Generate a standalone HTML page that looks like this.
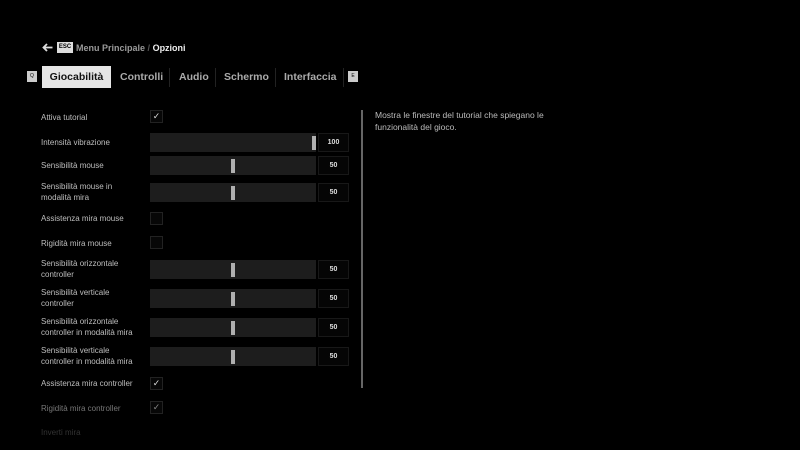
<!DOCTYPE html>
<html><head><meta charset="utf-8"><style>
*{margin:0;padding:0;box-sizing:border-box}
body{width:800px;height:450px;background:#000;font-family:"Liberation Sans",sans-serif;position:relative;overflow:hidden;color:#ccc}
.a{position:absolute}
.lbl{position:absolute;left:41px;font-size:8px;line-height:11px;color:#bdbdbd}
.bar{position:absolute;left:150px;width:166px;height:19px;background:#1d1d1d}
.val{position:absolute;left:318px;width:31px;height:19px;background:#050505;border:1px solid #181818;font-size:7px;font-weight:bold;color:#ddd;text-align:center;line-height:17px}
.knob{position:absolute;top:3px;width:4px;height:14px;background:#b0b0b0}
.cb{position:absolute;left:150px;width:13px;height:13px;border:1px solid #222;background:#070707;font-size:9px;color:#ddd;text-align:center;line-height:11px}
.tab{position:absolute;top:66px;height:22px;font-size:10.5px;font-weight:bold;color:#aaa;line-height:22px}
.sep{position:absolute;top:68px;width:1px;height:19px;background:#222}
</style></head><body>
<svg class="a" style="left:42px;top:43px" width="11" height="9" viewBox="0 0 11 9"><path d="M5 1L1.5 4.5L5 8M1.5 4.5H10.5" stroke="#ddd" stroke-width="1.8" fill="none"/></svg>
<div class="a" style="left:57px;top:42px;width:16px;height:11px;background:#ddd;color:#000;font-size:6px;font-weight:bold;text-align:center;line-height:11px">ESC</div>
<div class="a" style="left:76px;top:42px;font-size:9px;font-weight:bold;color:#999;line-height:12px">Menu Principale <span style="color:#555">/</span> <span style="color:#eee">Opzioni</span></div>
<div class="a" style="left:27px;top:71px;width:10px;height:11px;background:#ccc;color:#000;font-size:5px;text-align:center;line-height:11px">Q</div>
<div class="tab" style="left:42px;width:69px;background:#e6e6e6;color:#111;text-align:center">Giocabilità</div>
<div class="tab" style="left:120px">Controlli</div>
<div class="sep" style="left:169px"></div>
<div class="tab" style="left:179px">Audio</div>
<div class="sep" style="left:215px"></div>
<div class="tab" style="left:224px">Schermo</div>
<div class="sep" style="left:275px"></div>
<div class="tab" style="left:284px">Interfaccia</div>
<div class="sep" style="left:343px"></div>
<div class="a" style="left:348px;top:71px;width:10px;height:11px;background:#ccc;color:#000;font-size:5px;text-align:center;line-height:11px">E</div>
<div class="a" style="left:361px;top:110px;width:2px;height:278px;background:#666"></div>
<div class="a" style="left:375px;top:109px;font-size:8.5px;line-height:12px;color:#bbb;width:180px">Mostra le finestre del tutorial che spiegano le funzionalità del gioco.</div>

<div class="lbl" style="top:112px">Attiva tutorial</div><div class="cb" style="top:110px">✓</div>
<div class="lbl" style="top:137px">Intensità vibrazione</div><div class="bar" style="top:133px"><div class="knob" style="left:162px"></div></div><div class="val" style="top:133px">100</div>
<div class="lbl" style="top:160px">Sensibilità mouse</div><div class="bar" style="top:156px"><div class="knob" style="left:81px"></div></div><div class="val" style="top:156px">50</div>
<div class="lbl" style="top:181px">Sensibilità mouse in<br>modalità mira</div><div class="bar" style="top:183px"><div class="knob" style="left:81px"></div></div><div class="val" style="top:183px">50</div>
<div class="lbl" style="top:213px">Assistenza mira mouse</div><div class="cb" style="top:212px"></div>
<div class="lbl" style="top:238px">Rigidità mira mouse</div><div class="cb" style="top:236px"></div>
<div class="lbl" style="top:258px">Sensibilità orizzontale<br>controller</div><div class="bar" style="top:260px"><div class="knob" style="left:81px"></div></div><div class="val" style="top:260px">50</div>
<div class="lbl" style="top:287px">Sensibilità verticale<br>controller</div><div class="bar" style="top:289px"><div class="knob" style="left:81px"></div></div><div class="val" style="top:289px">50</div>
<div class="lbl" style="top:316px">Sensibilità orizzontale<br>controller in modalità mira</div><div class="bar" style="top:318px"><div class="knob" style="left:81px"></div></div><div class="val" style="top:318px">50</div>
<div class="lbl" style="top:345px">Sensibilità verticale<br>controller in modalità mira</div><div class="bar" style="top:347px"><div class="knob" style="left:81px"></div></div><div class="val" style="top:347px">50</div>
<div class="lbl" style="top:378px">Assistenza mira controller</div><div class="cb" style="top:377px">✓</div>
<div class="lbl" style="top:403px;color:#777">Rigidità mira controller</div><div class="cb" style="top:401px;color:#888">✓</div>
<div class="lbl" style="top:427px;color:#333">Inverti mira</div>
</body></html>
